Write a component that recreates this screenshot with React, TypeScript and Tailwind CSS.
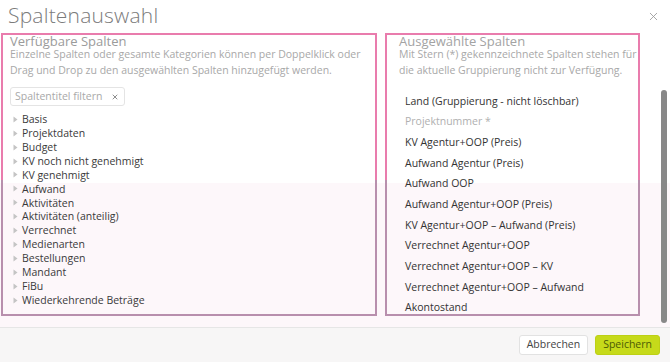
import {X} from "lucide-react";

const categories = [
    "Basis",
    "Projektdaten",
    "Budget",
    "KV noch nicht genehmigt",
    "KV genehmigt",
    "Aufwand",
    "Aktivitäten",
    "Aktivitäten (anteilig)",
    "Verrechnet",
    "Medienarten",
    "Bestellungen",
    "Mandant",
    "FiBu",
    "Wiederkehrende Beträge",
];

const selected: {label: string; muted?: boolean}[] = [
    {label: "Land (Gruppierung - nicht löschbar)"},
    {label: "Projektnummer *", muted: true},
    {label: "KV Agentur+OOP (Preis)"},
    {label: "Aufwand Agentur (Preis)"},
    {label: "Aufwand OOP"},
    {label: "Aufwand Agentur+OOP (Preis)"},
    {label: "KV Agentur+OOP – Aufwand (Preis)"},
    {label: "Verrechnet Agentur+OOP"},
    {label: "Verrechnet Agentur+OOP – KV"},
    {label: "Verrechnet Agentur+OOP – Aufwand"},
    {label: "Akontostand"},
];

function Caret() {
    return (
        <svg width="5" height="7" viewBox="0 0 5 7" className="shrink-0">
            <path d="M0.5 0.5 L4.5 3.5 L0.5 6.5 Z" fill="#c4c4c4"/>
        </svg>
    );
}

export default function App() {
    return (
        <div className="w-[670px] h-[362px] overflow-hidden flex flex-col bg-[linear-gradient(to_bottom,#ffffff_183px,#fdf7fa_183px)] font-['Open_Sans',sans-serif]">
            {/* header */}
            <div className="h-[33px] shrink-0 flex items-center justify-between pl-[8px] pr-[10px]">
                <div className="text-[21px] font-light text-[#7b7b7b] tracking-[0.2px] leading-none -mt-[2px]">Spaltenauswahl</div>
                <X size={13} strokeWidth={1.6} className="text-[#9a9a9a]"/>
            </div>

            {/* body */}
            <div className="h-[294px] shrink-0 flex">
                <div className="ml-[1px] w-[376px] h-[283px] border-2 [border-image:linear-gradient(to_bottom,#e97cad_52%,#b88fad_52%)_1] pl-[7px] pr-[4px] flex flex-col">
                    <div className="text-[13px] text-[#9b9b9b] leading-[11px] pt-[1px]">Verfügbare Spalten</div>
                    <div className="text-[10.5px] text-[#a8a8a8] leading-[15.7px] whitespace-nowrap">
                        Einzelne Spalten oder gesamte Kategorien können per Doppelklick oder
                        <br/>
                        Drag und Drop zu den ausgewählten Spalten hinzugefügt werden.
                    </div>
                    <div className="mt-[9px] w-[115px] h-[19px] shrink-0 border border-[#e4e4e4] rounded-[3px] flex items-center justify-between pl-[4px] pr-[5px]">
                        <span className="text-[10.5px] text-[#a9a9a9]">Spaltentitel filtern</span>
                        <X size={8} strokeWidth={2.2} className="text-[#666]"/>
                    </div>
                    <div className="mt-[6px] flex flex-col">
                        {categories.map((c) => (
                            <div key={c} className="h-[13.92px] flex items-center gap-[4px] pl-[3px]">
                                <Caret/>
                                <span className="text-[10.5px] text-[#3a3a3a] leading-none">{c}</span>
                            </div>
                        ))}
                    </div>
                </div>

                <div className="ml-[8px] w-[255px] h-[283px] border-2 [border-image:linear-gradient(to_bottom,#e97cad_52%,#b88fad_52%)_1] pl-[12px] pr-[2px] flex flex-col">
                    <div className="text-[13px] text-[#a3a3a3] leading-[11px] pt-[1px]">Ausgewählte Spalten</div>
                    <div className="text-[10.5px] text-[#a8a8a8] leading-[15.7px] whitespace-nowrap">
                        Mit Stern (*) gekennzeichnete Spalten stehen für
                        <br/>
                        die aktuelle Gruppierung nicht zur Verfügung.
                    </div>
                    <div className="mt-[12px] pl-[6px] flex flex-col">
                        {selected.map((s) => (
                            <div
                                key={s.label}
                                className={"h-[20.7px] flex items-center text-[10.5px] leading-none " + (s.muted ? "text-[#b0b0b0]" : "text-[#333]")}
                            >
                                {s.label}
                            </div>
                        ))}
                    </div>
                </div>

                <div className="ml-[21px] pt-[57px]">
                    <div className="w-[6px] h-[233px] rounded-full bg-[#888]"/>
                </div>
            </div>

            {/* footer */}
            <div className="flex-1 border-t border-[#e6e6e6] bg-[#f7f6f6] flex items-center justify-end gap-[7px] pr-[10px]">
                <button className="h-[20px] px-[7px] bg-white border border-[#e2e2e2] rounded-[3px] text-[10.5px] text-[#444]">
                    Abbrechen
                </button>
                <button className="h-[20px] px-[7px] bg-[#c6da1a] border border-[#bdd015] rounded-[3px] text-[10.5px] text-[#4d5a05]">
                    Speichern
                </button>
            </div>
        </div>
    );
}
